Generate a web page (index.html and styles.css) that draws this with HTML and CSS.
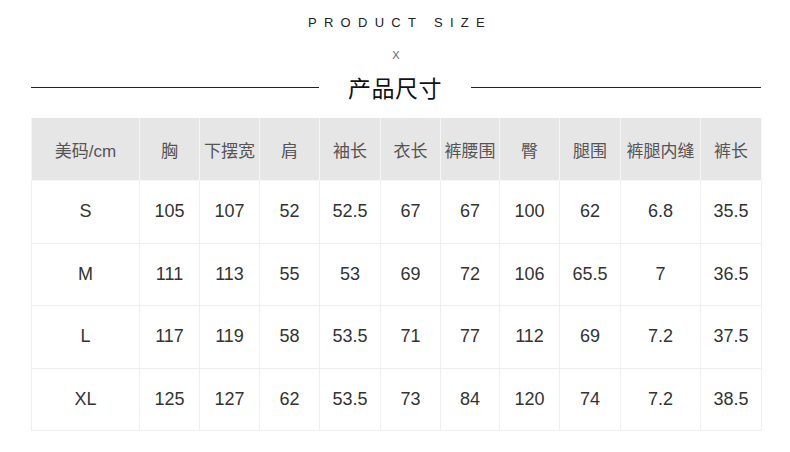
FILE: index.html
```html
<!DOCTYPE html>
<html lang="zh">
<head>
<meta charset="utf-8">
<link rel="stylesheet" href="styles.css">
</head>
<body>
<div class="page">
  <div class="en-title">PRODUCT SIZE</div>
  <div class="x">X</div>
  <div class="cn-row">
    <span class="line"></span>
    <span class="cn-title">产品尺寸</span>
    <span class="line"></span>
  </div>
  <table class="size">
    <colgroup>
      <col class="c108"><col class="c60"><col class="c60"><col class="c60"><col class="c61"><col class="c60"><col class="c59"><col class="c60"><col class="c61"><col class="c80"><col class="c61">
    </colgroup>
    <thead>
      <tr><th>美码/cm</th><th>胸</th><th>下摆宽</th><th>肩</th><th>袖长</th><th>衣长</th><th>裤腰围</th><th>臀</th><th>腿围</th><th>裤腿内缝</th><th>裤长</th></tr>
    </thead>
    <tbody>
      <tr><td>S</td><td>105</td><td>107</td><td>52</td><td>52.5</td><td>67</td><td>67</td><td>100</td><td>62</td><td>6.8</td><td>35.5</td></tr>
      <tr><td>M</td><td>111</td><td>113</td><td>55</td><td>53</td><td>69</td><td>72</td><td>106</td><td>65.5</td><td>7</td><td>36.5</td></tr>
      <tr><td>L</td><td>117</td><td>119</td><td>58</td><td>53.5</td><td>71</td><td>77</td><td>112</td><td>69</td><td>7.2</td><td>37.5</td></tr>
      <tr><td>XL</td><td>125</td><td>127</td><td>62</td><td>53.5</td><td>73</td><td>84</td><td>120</td><td>74</td><td>7.2</td><td>38.5</td></tr>
    </tbody>
  </table>
</div>
</body>
</html>
```

FILE: styles.css
```css
* { box-sizing: border-box; }
html, body { margin: 0; padding: 0; background: #fff; }
body {
  font-family: "Liberation Sans", "Noto Sans CJK SC", sans-serif;
  color: #333;
}
.page {
  width: 790px;
  height: 452px;
  padding: 14px 29px 0 31px;
}
.en-title {
  text-align: center;
  font-size: 13px;
  letter-spacing: 7.3px;
  padding-left: 8px;
  color: #222;
  line-height: 18px;
}
.x {
  text-align: center;
  font-size: 11px;
  color: #666;
  line-height: 14px;
  margin-top: 16px;
}
.cn-row {
  display: flex;
  align-items: center;
  margin-top: 10px;
  height: 30px;
}
.line {
  flex: 0 0 288px;
  height: 1px;
  background: #222;
}
.line:last-child { flex: 0 0 290px; }
.cn-title {
  flex: 1;
  text-align: center;
  font-family: "Noto Sans CJK SC", sans-serif;
  font-size: 23px;
  color: #111;
  letter-spacing: 0.5px;
  line-height: 30px;
}
table.size {
  margin-top: 16px;
  width: 730px;
  border-collapse: collapse;
  table-layout: fixed;
}
.c108 { width: 108px; }
.c60 { width: 60px; }
.c61 { width: 61px; }
.c59 { width: 59px; }
.c80 { width: 80px; }
th, td {
  text-align: center;
  padding: 0;
  white-space: nowrap;
}
th {
  height: 62px;
  background: #e6e6e6;
  border: 1px solid #f6f6f6;
  border-top-color: #e6e6e6;
  font-weight: normal;
  font-size: 17px;
  color: #555;
}
td {
  height: 62.5px;
  border: 1px solid #efefef;
  font-size: 18px;
  color: #333;
}
```
